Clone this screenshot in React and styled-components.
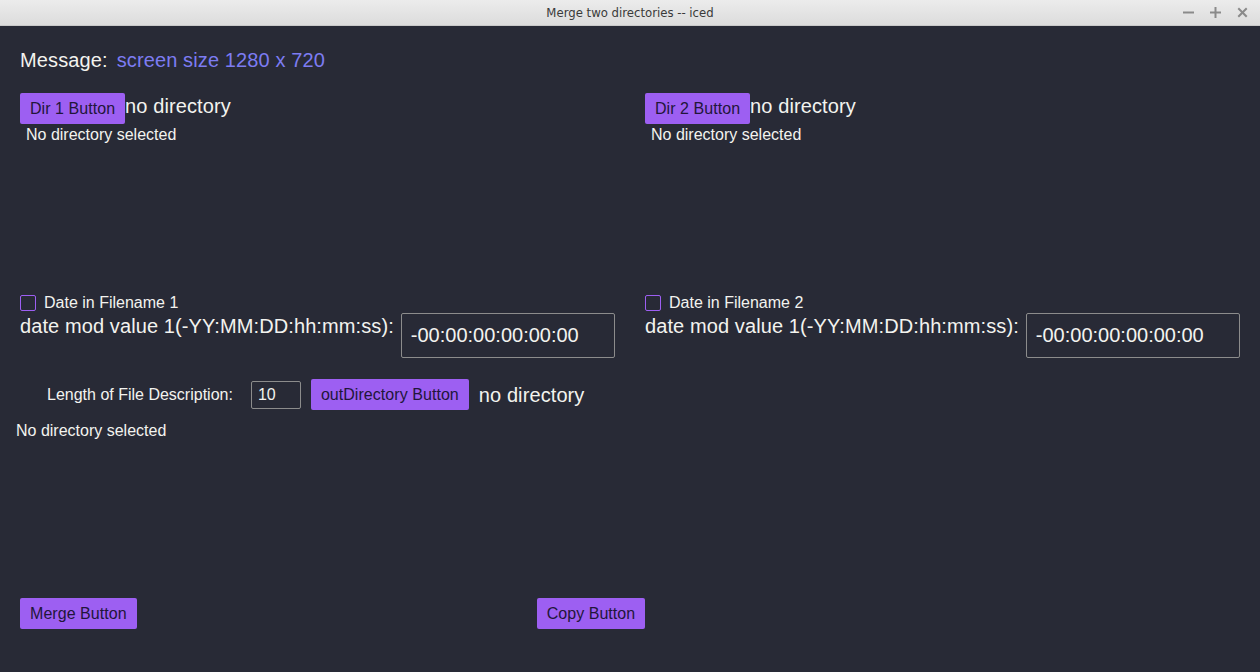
import React from "react";
import styled, { createGlobalStyle } from "styled-components";

const bg = "#282a36";
const textMain = "#f3f3ef";
const purple = "#9d5ff2";
const accent = "#7d7cf2";

const GlobalStyle = createGlobalStyle`
  html, body {
    margin: 0;
    padding: 0;
    background: ${bg};
  }
  body {
    font-family: "Liberation Sans", Arial, sans-serif;
  }
`;

const Window = styled.div`
  width: 1260px;
  height: 672px;
  display: flex;
  flex-direction: column;
  overflow: hidden;
`;

const TitleBar = styled.div`
  height: 26px;
  flex: none;
  display: grid;
  grid-template-columns: 1fr auto 1fr;
  align-items: center;
  background: linear-gradient(#ececec, #dcdcdc);
  border-bottom: 1px solid #c9c9c9;
  box-sizing: border-box;
`;

const Title = styled.div`
  grid-column: 2;
  font-family: "DejaVu Sans Condensed", "DejaVu Sans", sans-serif;
  font-stretch: condensed;
  font-size: 13px;
  color: #3a3a3a;
`;

const Controls = styled.div`
  justify-self: end;
  display: flex;
  align-items: center;
  gap: 16px;
  padding-right: 12px;
`;

const Content = styled.div`
  flex: 1;
  background: ${bg};
  padding: 21px 20px 0 20px;
  display: flex;
  flex-direction: column;
  color: ${textMain};
`;

const MessageRow = styled.div`
  display: flex;
  gap: 9px;
  font-size: 20px;
  line-height: 26px;
  letter-spacing: 0.12px;
`;

const Accent = styled.span`
  color: ${accent};
`;

const Columns = styled.div`
  margin-top: 20px;
  display: grid;
  grid-template-columns: 595px 595px;
  column-gap: 30px;
`;

const Col = styled.div`
  display: flex;
  flex-direction: column;
`;

const Row = styled.div`
  display: flex;
  align-items: ${(p) => p.$align || "flex-start"};
  gap: ${(p) => p.$gap || 0}px;
`;

const Button = styled.button`
  flex: none;
  background: ${purple};
  color: #22163a;
  border: none;
  border-radius: 2px;
  padding: 5px 10px;
  font-family: "Liberation Sans", Arial, sans-serif;
  font-size: 16px;
  line-height: 21px;
  letter-spacing: 0.05px;
  cursor: pointer;
`;

const BigText = styled.span`
  font-size: 20px;
  line-height: 26px;
  letter-spacing: 0.1px;
  white-space: nowrap;
`;

const SmallText = styled.div`
  font-size: 16px;
  line-height: 21px;
  margin-left: ${(p) => p.$indent || 0}px;
  white-space: nowrap;
`;

const ListArea = styled.div`
  height: 147px;
`;

const CheckRow = styled.label`
  display: flex;
  align-items: center;
  gap: 8px;
  font-size: 16px;
  line-height: 21px;
`;

const CheckBox = styled.span`
  width: 16px;
  height: 16px;
  box-sizing: border-box;
  border: 1px solid ${purple};
  border-radius: 2px;
`;

const TextInput = styled.div`
  flex: ${(p) => (p.$width ? "none" : 1)};
  width: ${(p) => (p.$width ? `${p.$width}px` : "auto")};
  height: ${(p) => p.$height}px;
  box-sizing: border-box;
  border: 1px solid #8c8c8c;
  border-radius: 2px;
  display: flex;
  align-items: center;
  padding: 0 ${(p) => p.$pad}px;
  font-size: ${(p) => p.$size}px;
  color: ${textMain};
`;

const DateRow = styled.div`
  display: flex;
  align-items: flex-start;
  gap: 7px;
`;

const LengthLabel = styled.span`
  font-size: 16px;
  padding-left: 27px;
  margin-right: 8px;
`;

const BottomRow = styled.div`
  margin-top: auto;
  margin-bottom: 43px;
  display: flex;
  gap: 400px;
`;

const Icon = ({ type }) => (
  <svg width="11" height="11" viewBox="0 0 11 11" stroke="#8a8a8a" strokeWidth="2" strokeLinecap="square">
    {type === "min" && <line x1="1" y1="5.5" x2="10" y2="5.5" />}
    {type === "max" && (
      <>
        <line x1="1" y1="5.5" x2="10" y2="5.5" />
        <line x1="5.5" y1="1" x2="5.5" y2="10" />
      </>
    )}
    {type === "close" && (
      <>
        <line x1="2" y1="2" x2="9" y2="9" />
        <line x1="9" y1="2" x2="2" y2="9" />
      </>
    )}
  </svg>
);

const DirColumn = ({ n }) => (
  <Col>
    <Row>
      <Button>Dir {n} Button</Button>
      <BigText>no directory</BigText>
    </Row>
    <SmallText $indent={6}>No directory selected</SmallText>
    <ListArea />
    <CheckRow>
      <CheckBox />
      Date in Filename {n}
    </CheckRow>
    <DateRow>
      <BigText>date mod value 1(-YY:MM:DD:hh:mm:ss):</BigText>
      <TextInput $height={45} $pad={9} $size={20}>-00:00:00:00:00:00</TextInput>
    </DateRow>
  </Col>
);

export default function App() {
  return (
    <>
      <GlobalStyle />
      <Window>
        <TitleBar>
          <Title>Merge two directories -- iced</Title>
          <Controls>
            <Icon type="min" />
            <Icon type="max" />
            <Icon type="close" />
          </Controls>
        </TitleBar>
        <Content>
          <MessageRow>
            <span>Message:</span>
            <Accent>screen size 1280 x 720</Accent>
          </MessageRow>
          <Columns>
            <DirColumn n={1} />
            <DirColumn n={2} />
          </Columns>
          <Row $align="center" $gap={10} style={{ marginTop: 21 }}>
            <LengthLabel>Length of File Description:</LengthLabel>
            <TextInput $width={50} $height={28} $pad={6} $size={16}>10</TextInput>
            <Button>outDirectory Button</Button>
            <BigText>no directory</BigText>
          </Row>
          <SmallText $indent={-4} style={{ marginTop: 10 }}>No directory selected</SmallText>
          <BottomRow>
            <Button>Merge Button</Button>
            <Button>Copy Button</Button>
          </BottomRow>
        </Content>
      </Window>
    </>
  );
}
